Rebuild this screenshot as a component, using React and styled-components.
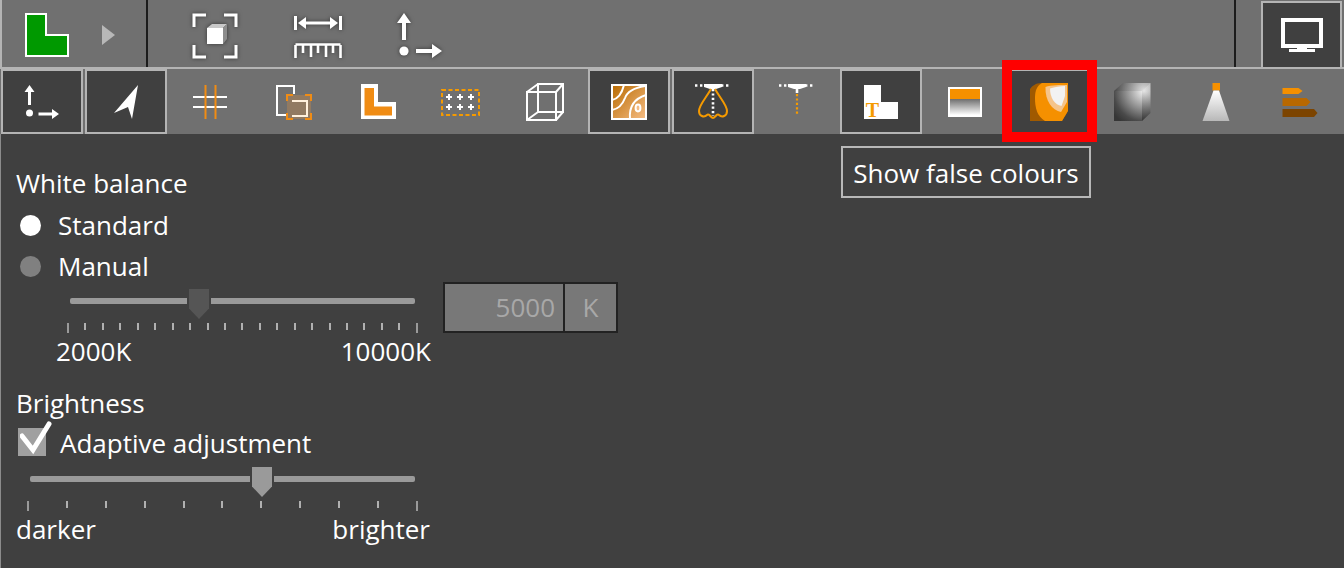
import React from "react";
import styled, { createGlobalStyle } from "styled-components";

const Global = createGlobalStyle`
  html, body { margin: 0; padding: 0; background: #404040; }
  * { box-sizing: border-box; }
`;

const Page = styled.div`
  position: relative;
  width: 1344px;
  height: 568px;
  overflow: hidden;
  background: #404040;
  color: #fff;
  font-family: "Open Sans", "Noto Sans", sans-serif;
  font-size: 26px;
`;

const TopBar = styled.header`
  display: flex;
  height: 69px;
  background: #707070;
  border-left: 2px solid #b4b4b4;
  border-bottom: 2px solid #b4b4b4;
`;
const ModeGroup = styled.div`
  display: flex;
  align-items: center;
  width: 144px;
  padding: 3px 0 0 23px;
  gap: 33px;
`;
const Divider = styled.div`
  width: 2px;
  background: #1c1c1c;
`;
const ToolGroup = styled.div`
  display: flex;
  align-items: center;
  flex: 1;
  padding: 4px 0 0 43px;
  gap: 53px;
`;
const MonitorWrap = styled.div`
  width: 108px;
  padding: 1px 0 0 25px;
  display: flex;
`;
const MonitorButton = styled.div`
  width: 81px;
  height: 66px;
  background: #404040;
  border: 2px solid #b4b4b4;
  border-bottom: none;
  display: flex;
  align-items: center;
  justify-content: center;
`;

const Toolbar = styled.nav`
  display: grid;
  grid-template-columns: repeat(16, 83.9px);
  height: 65px;
  background: #707070;
`;
const ToolCell = styled.div`
  position: relative;
  margin: 0 1px;
  padding-top: 1px;
  display: flex;
  align-items: center;
  justify-content: center;
  background: ${(p) => (p.$active ? "#404040" : "transparent")};
  border: 2px solid ${(p) => (p.$active ? "#b4b4b4" : "transparent")};
`;
const Highlight = styled.div`
  position: absolute;
  top: -11px;
  bottom: -10px;
  left: -8px;
  right: -9px;
  border: 10px solid #ff0000;
  pointer-events: none;
`;
const ToolIcon = styled.svg`
  width: 48px;
  height: 48px;
  display: block;
  flex: none;
`;
const BarIcon = styled(ToolIcon)`
  filter: drop-shadow(0 0 2px rgba(40, 40, 40, 0.8));
`;

const Tooltip = styled.div`
  position: absolute;
  left: 841px;
  top: 146px;
  width: 250px;
  height: 52px;
  padding-top: 2px;
  border: 2px solid #b8b8b8;
  background: #404040;
  display: flex;
  align-items: center;
  justify-content: center;
  white-space: nowrap;
`;

const Panel = styled.main`
  padding: 29px 0 0 15px;
  height: 434px;
  border-left: 1px solid #8c8c8c;
`;
const Heading = styled.div`
  height: 41px;
  line-height: 41px;
  white-space: nowrap;
`;
const Option = styled.div`
  display: flex;
  align-items: center;
  height: 41px;
  padding-left: 4px;
  gap: 17px;
  white-space: nowrap;
`;
const Radio = styled.span`
  width: 21px;
  height: 21px;
  margin-top: 1px;
  border-radius: 50%;
  background: ${(p) => (p.$on ? "#ffffff" : "#808080")};
  flex: none;
`;
const SliderRow = styled.div`
  display: flex;
  align-items: flex-start;
  margin: -4px 0 0 40px;
`;
const SliderBlock = styled.div`
  width: ${(p) => p.$width}px;
  padding-top: ${(p) => p.$top}px;
`;
const TrackArea = styled.div`
  position: relative;
  height: 30px;
  margin: 0 ${(p) => p.$right}px 0 ${(p) => p.$left}px;
`;
const Rail = styled.div`
  position: absolute;
  left: 0;
  right: 0;
  top: 9px;
  height: 6px;
  border-radius: 2px;
  background: #9a9a9a;
`;
const ThumbGap = styled.div`
  position: absolute;
  top: 0;
  width: 24px;
  height: 30px;
  left: ${(p) => p.$at - 2}px;
  background: #404040;
`;
const Thumb = styled.div`
  width: 20px;
  height: 30px;
  margin-left: 2px;
  background: ${(p) => p.$color};
  clip-path: polygon(0 0, 100% 0, 100% 65%, 50% 100%, 0 65%);
`;
const Ticks = styled.div`
  display: flex;
  justify-content: space-between;
  align-items: flex-start;
  height: 10px;
  margin: 4px ${(p) => p.$right}px 0 ${(p) => p.$left}px;
`;
const Tick = styled.span`
  width: 2px;
  height: ${(p) => (p.$major ? 10 : 7)}px;
  background: ${(p) => (p.$major ? "#9a9a9a" : "#b0b0b0")};
`;
const Scale = styled.div`
  display: flex;
  justify-content: space-between;
  height: 28px;
  line-height: 28px;
  margin-top: 4px;
  white-space: nowrap;
`;
const ValueBox = styled.div`
  display: flex;
  width: 175px;
  height: 51px;
  margin-left: 12px;
  border: 2px solid #222;
  background: #222;
  gap: 2px;
  color: #a8a8a8;
`;
const ValueInput = styled.div`
  flex: 1;
  background: #787878;
  text-align: right;
  padding-right: 8px;
  line-height: 47px;
`;
const ValueUnit = styled.div`
  width: 51px;
  background: #787878;
  text-align: center;
  line-height: 47px;
`;
const BrightnessHeading = styled(Heading)`
  margin-top: 18px;
`;
const CheckRow = styled.div`
  display: flex;
  align-items: center;
  height: 41px;
  margin-top: -2px;
  padding-left: 2px;
  gap: 14px;
  white-space: nowrap;
`;
const CheckBox = styled.span`
  position: relative;
  width: 28px;
  height: 28px;
  margin-top: -1px;
  background: #a0a0a0;
  flex: none;
  & > svg { position: absolute; left: 2px; top: -8px; }
`;
const BrightnessSlider = styled.div`
  margin-top: 4px;
  width: 414px;
`;

const White = "#ffffff";
const Orange = "#f08c14";

const AxesSmall = () => (
  <ToolIcon viewBox="0 0 48 48">
    <polygon points="11.5,7 16.5,14 13,14 13,27 10,27 10,14 6.5,14" fill={White} />
    <circle cx="11.5" cy="35" r="3.5" fill={White} />
    <polygon points="20.5,34.5 34,34.5 34,31 41,36 34,41 34,37.5 20.5,37.5" fill={White} />
  </ToolIcon>
);
const North = () => (
  <ToolIcon viewBox="0 0 48 48">
    <polygon points="36,7 30,41 26,29 12,35" fill={White} />
  </ToolIcon>
);
const GridLines = () => (
  <ToolIcon viewBox="0 0 48 48">
    <path d="M7 19H41M7 29H41" stroke={White} strokeWidth="2" />
    <path d="M19.5 7V41M29.5 7V41" stroke={Orange} strokeWidth="2" />
  </ToolIcon>
);
const CopyFrame = () => (
  <ToolIcon viewBox="0 0 48 48">
    <path d="M24 16V8H7V37H16" fill="none" stroke={White} strokeWidth="2" />
    <rect x="17" y="17" width="24" height="24" fill="#917a62" />
    <path d="M22 23H37V38H22" fill="none" stroke="#fff0dc" strokeWidth="2" />
    <path d="M17 23V17H23M35 17H41V23M41 35V41H35M23 41H17V35" fill="none" stroke={Orange} strokeWidth="2" />
  </ToolIcon>
);
const OrangeL = () => (
  <ToolIcon viewBox="0 0 48 48">
    <polygon points="7,6 24,6 24,24 42,24 42,41 7,41" fill={White} />
    <polygon points="10.5,10 20,10 20,28.5 38,28.5 38,37.5 10.5,37.5" fill={Orange} />
  </ToolIcon>
);
const DotGrid = () => {
  const plus = [];
  [12, 23, 34].forEach((x) =>
    [19, 29].forEach((y) => plus.push(`M${x - 3} ${y}H${x + 3}M${x} ${y - 3}V${y + 3}`))
  );
  return (
    <ToolIcon viewBox="0 0 48 48">
      <rect x="5" y="12" width="37" height="25" fill="none" stroke="#f59a00" strokeWidth="2" strokeDasharray="4 2.5" />
      <path d={plus.join("")} stroke={White} strokeWidth="2" />
    </ToolIcon>
  );
};
const Wire = () => (
  <ToolIcon viewBox="0 0 48 48">
    <g fill="none" stroke={White} strokeWidth="2">
      <rect x="6" y="14" width="29" height="28" />
      <rect x="17" y="6" width="25" height="28" />
      <path d="M6 14L17 6M35 14L42 6M35 42L42 34M6 42L17 34" />
    </g>
  </ToolIcon>
);
const Terrain = () => (
  <ToolIcon viewBox="0 0 48 48">
    <defs>
      <linearGradient id="terr" x1="0" y1="0" x2="1" y2="1">
        <stop offset="0" stopColor="#b86a00" />
        <stop offset="1" stopColor="#f6bd85" />
      </linearGradient>
    </defs>
    <rect x="7" y="7" width="34" height="34" fill="url(#terr)" stroke="#fff" strokeWidth="2" />
    <g fill="none" stroke={White} strokeWidth="2">
      <path d="M7 22C13 21 17 15 19 7" />
      <path d="M7 32C13 31 17 28 20 20C22 14 28 10 40 8" />
      <path d="M25 41C24 30 28 21 41 17" />
    </g>
    <ellipse cx="33" cy="30" rx="2.4" ry="3.4" fill="#f6bd85" stroke={White} strokeWidth="2" />
  </ToolIcon>
);
const Lamp = () => (
  <ToolIcon viewBox="0 0 48 48">
    <path d="M6 7.5H16M32 7.5H42" stroke={White} strokeWidth="2.4" strokeDasharray="2.4 2.6" />
    <polygon points="15,6 33,6 33,9 27,11 21,11 15,9" fill={White} />
    <path d="M22 11C17 20 10 27 10 33C10 38 15 40 18 37C20 35 22 40 24 40C26 40 28 35 30 37C33 40 38 38 38 33C38 27 31 20 26 11" fill="none" stroke="#f59a00" strokeWidth="2" />
    <path d="M24 11V38" stroke={White} strokeWidth="2.6" strokeDasharray="2.2 2.2" />
  </ToolIcon>
);
const LampOff = () => (
  <ToolIcon viewBox="0 0 48 48">
    <path d="M6 7.5H16M32 7.5H42" stroke={White} strokeWidth="2.4" strokeDasharray="2.4 2.6" />
    <polygon points="15,6 33,6 33,9 27,11 21,11 15,9" fill={White} />
    <path d="M24 11V15" stroke={White} strokeWidth="2.6" />
    <path d="M24 16V38" stroke="#f59a00" strokeWidth="2.2" strokeDasharray="2.2 2.2" />
  </ToolIcon>
);
const LabelL = () => (
  <ToolIcon viewBox="0 0 48 48">
    <polygon points="7,7 24,7 24,24 41,24 41,41 7,41" fill={White} />
    <text x="15.5" y="39" fontFamily="'Liberation Serif', serif" fontWeight="700" fontSize="20" fill="#f59a00" textAnchor="middle">T</text>
  </ToolIcon>
);
const GradientBar = () => (
  <ToolIcon viewBox="0 0 48 48">
    <defs>
      <linearGradient id="gbar" x1="0" y1="0" x2="0" y2="1">
        <stop offset="0" stopColor="#6e6e6e" />
        <stop offset="1" stopColor="#ffffff" />
      </linearGradient>
    </defs>
    <rect x="7" y="9" width="34" height="30" fill={White} />
    <rect x="9" y="11" width="30" height="10" fill="#f59000" />
    <rect x="9" y="21" width="30" height="16" fill="url(#gbar)" />
  </ToolIcon>
);
const FalseColour = () => (
  <ToolIcon viewBox="0 0 48 48">
    <path d="M5 11C7 8 11 5 16 5H43V33L37 43H5Z" fill="#a05a00" />
    <path d="M17 5H43V33L37 43H20C12 38 10 30 10 20C10 12 12 8 17 5Z" fill="#f59000" />
    <path d="M20.5 9C26 7 36 7 42 7V24L36 34C27 32 20 23 20.5 9Z" fill="#f5c48a" />
    <path d="M25 10.5C30 9 35 8 40 8V18L36.5 28C30 27 25 20 25 10.5Z" fill="#f2f2f2" />
  </ToolIcon>
);
const ShadedCube = () => (
  <ToolIcon viewBox="0 0 48 48">
    <defs>
      <radialGradient id="sc" gradientUnits="userSpaceOnUse" cx="35" cy="13" r="38">
        <stop offset="0" stopColor="#f4f4f4" />
        <stop offset="0.35" stopColor="#a8a8a8" />
        <stop offset="0.8" stopColor="#4a4a4a" />
        <stop offset="1" stopColor="#363636" />
      </radialGradient>
      <linearGradient id="sf" x1="0" y1="0" x2="0" y2="1">
        <stop offset="0" stopColor="#000" stopOpacity="0" />
        <stop offset="1" stopColor="#000" stopOpacity="0.3" />
      </linearGradient>
    </defs>
    <path d="M5 13L14 5H41.5V35L33 43H5Z" fill="url(#sc)" />
    <path d="M33 13L41.5 5V35L33 43Z" fill="url(#sf)" />
    <path d="M5 13L14 5H41.5L33 13Z" fill="#000" opacity="0.08" />
  </ToolIcon>
);
const Cone = () => (
  <ToolIcon viewBox="0 0 48 48">
    <defs>
      <linearGradient id="cn" x1="0" y1="0" x2="0" y2="1">
        <stop offset="0" stopColor="#ffffff" />
        <stop offset="1" stopColor="#b8b8b8" />
      </linearGradient>
    </defs>
    <rect x="20.5" y="5" width="7.5" height="7.5" fill="#f59000" />
    <polygon points="21.5,12.5 27,12.5 37.5,43 10.5,43" fill="url(#cn)" />
  </ToolIcon>
);
const EnergyBars = () => (
  <ToolIcon viewBox="0 0 48 48">
    <polygon points="6.5,10 22.5,10 26.5,13 22.5,16 6.5,16" fill="#f59000" />
    <polygon points="6.5,20 30.5,20 34.5,24 30.5,28 6.5,28" fill="#b86800" />
    <polygon points="6.5,31 38,31 41.5,35 38,39 6.5,39" fill="#7c4400" />
  </ToolIcon>
);

const ModeIcon = () => (
  <svg width="44" height="44" viewBox="0 0 44 44">
    <polygon points="1,1 21,1 21,22 43,22 43,43 1,43" fill="#009900" stroke={White} strokeWidth="2" />
  </svg>
);
const Expand = () => (
  <svg width="13" height="20" viewBox="0 0 13 20">
    <polygon points="0,0 13,10 0,20" fill="#b8b8b8" />
  </svg>
);
const FitView = () => (
  <BarIcon viewBox="0 0 48 48">
    <path d="M15 3H3V15M33 3H45V15M45 33V45H33M15 45H3V33" fill="none" stroke={White} strokeWidth="3" />
    <polygon points="16,16 21,12 36,12 32,16" fill="#c8c8c8" />
    <polygon points="32,16 36,12 36,27 32,32" fill="#8c8c8c" />
    <rect x="16" y="16" width="16" height="16" fill={White} />
  </BarIcon>
);
const Measure = () => (
  <BarIcon viewBox="0 0 48 48" style={{ marginLeft: 2 }}>
    <path d="M1.5 4V18M46.5 4V18" stroke={White} strokeWidth="3" />
    <path d="M12 11H36" stroke={White} strokeWidth="3" />
    <polygon points="4,11 12,5 12,17" fill={White} />
    <polygon points="44,11 36,5 36,17" fill={White} />
    <path d="M1.5 33V46M1.5 32.5H46.5M46.5 33V46M9 33V41M17 33V45M24 33V41M32 33V45M39 33V41" fill="none" stroke={White} strokeWidth="2.6" />
  </BarIcon>
);
const AxesLarge = () => (
  <BarIcon viewBox="0 0 48 48">
    <polygon points="9,1 16,11 11,11 11,28 7,28 7,11 2,11" fill={White} />
    <circle cx="9" cy="39" r="4.6" fill={White} />
    <polygon points="21,37 37,37 37,32 47,39 37,46 37,41 21,41" fill={White} />
  </BarIcon>
);
const Monitor = () => (
  <svg width="42" height="35" viewBox="0 0 42 35">
    <rect x="2" y="2" width="38" height="26" fill="none" stroke={White} strokeWidth="4" />
    <rect x="16" y="28" width="10" height="3" fill={White} />
    <rect x="8" y="31" width="26" height="3" fill={White} />
  </svg>
);

const tools = [
  { Icon: AxesSmall, active: true },
  { Icon: North, active: true },
  { Icon: GridLines },
  { Icon: CopyFrame },
  { Icon: OrangeL },
  { Icon: DotGrid },
  { Icon: Wire },
  { Icon: Terrain, active: true },
  { Icon: Lamp, active: true },
  { Icon: LampOff },
  { Icon: LabelL, active: true },
  { Icon: GradientBar },
  { Icon: FalseColour, active: true, flagged: true },
  { Icon: ShadedCube },
  { Icon: Cone },
  { Icon: EnergyBars },
];

const Slider = ({ count, at, thumb, track, ticks, width, top, low, high }) => (
  <SliderBlock $width={width} $top={top}>
    <TrackArea $left={track[0]} $right={track[1]}>
      <Rail />
      <ThumbGap $at={at}>
        <Thumb $color={thumb} />
      </ThumbGap>
    </TrackArea>
    <Ticks $left={ticks[0]} $right={ticks[1]}>
      {Array.from({ length: count }, (_, i) => (
        <Tick key={i} $major={i === 0 || i === count - 1} />
      ))}
    </Ticks>
    <Scale>
      <span>{low}</span>
      <span>{high}</span>
    </Scale>
  </SliderBlock>
);

export default function App() {
  return (
    <Page>
      <Global />
      <TopBar>
        <ModeGroup>
          <ModeIcon />
          <Expand />
        </ModeGroup>
        <Divider />
        <ToolGroup>
          <FitView />
          <Measure />
          <AxesLarge />
        </ToolGroup>
        <Divider />
        <MonitorWrap>
          <MonitorButton>
            <Monitor />
          </MonitorButton>
        </MonitorWrap>
      </TopBar>
      <Toolbar>
        {tools.map(({ Icon, active, flagged }, i) => (
          <ToolCell key={i} $active={active}>
            <Icon />
            {flagged && <Highlight />}
          </ToolCell>
        ))}
      </Toolbar>
      <Panel>
        <Heading>White balance</Heading>
        <Option>
          <Radio $on />
          Standard
        </Option>
        <Option>
          <Radio />
          Manual
        </Option>
        <SliderRow>
          <Slider
            count={21}
            at={119}
            thumb="#555555"
            track={[14, 16]}
            ticks={[11, 13]}
            width={375}
            top={7}
            low="2000K"
            high="10000K"
          />
          <ValueBox>
            <ValueInput>5000</ValueInput>
            <ValueUnit>K</ValueUnit>
          </ValueBox>
        </SliderRow>
        <BrightnessHeading>Brightness</BrightnessHeading>
        <CheckRow>
          <CheckBox>
            <svg width="34" height="36" viewBox="0 0 34 36">
              <path d="M2 16L13 30L29 4" fill="none" stroke={White} strokeWidth="5" strokeLinecap="round" strokeLinejoin="miter" />
            </svg>
          </CheckBox>
          Adaptive adjustment
        </CheckRow>
        <BrightnessSlider>
          <Slider
            count={11}
            at={222}
            thumb="#9a9a9a"
            track={[14, 15]}
            ticks={[11, 12]}
            width={414}
            top={0}
            low="darker"
            high="brighter"
          />
        </BrightnessSlider>
      </Panel>
      <Tooltip>Show false colours</Tooltip>
    </Page>
  );
}
